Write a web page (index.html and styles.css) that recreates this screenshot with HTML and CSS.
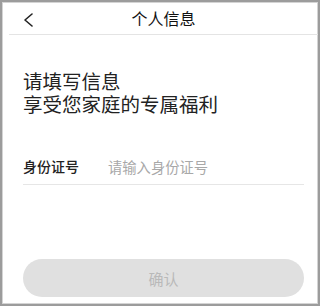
FILE: index.html
```html
<!DOCTYPE html>
<html lang="zh">
<head>
<meta charset="utf-8">
<link rel="stylesheet" href="styles.css">
</head>
<body>
<div class="frame">
  <header class="nav">
    <span class="back"><svg width="11" height="14" viewBox="0 0 11 14"><path d="M9 1 L2 7 L9 13" fill="none" stroke="#222" stroke-width="1.6" stroke-linecap="round" stroke-linejoin="round"/></svg></span>
    <h1 class="title">个人信息</h1>
  </header>
  <main class="content">
    <div class="intro">
      <p class="intro-line">请填写信息</p>
      <p class="intro-line">享受您家庭的专属福利</p>
    </div>
    <div class="field">
      <label class="label">身份证号</label>
      <span class="placeholder">请输入身份证号</span>
    </div>
    <div class="spacer"></div>
    <button class="confirm">确认</button>
  </main>
</div>
</body>
</html>
```
FILE: styles.css
```css
html, body {
  margin: 0;
  padding: 0;
  background: #fff;
}
body {
  font-family: "Noto Sans CJK SC", "Noto Sans", sans-serif;
}
.frame {
  box-sizing: border-box;
  width: 320px;
  height: 306px;
  border: 2px solid #9c9c9c;
  box-shadow: inset 0 0 0 1px #d4d4d4;
  display: flex;
  flex-direction: column;
}
.nav {
  position: relative;
  height: 32px;
  margin-left: 7px;
  border-bottom: 1px solid #e4e4e4;
  display: flex;
  align-items: center;
  justify-content: center;
}
.back {
  position: absolute;
  left: 14px;
  top: 11px;
  display: flex;
}
.title {
  margin: 0;
  font-size: 16px;
  font-weight: 400;
  color: #111;
  line-height: 32px;
}
.content {
  flex: 1;
  display: flex;
  flex-direction: column;
  padding: 0 14px 7px 21px;
}
.intro {
  margin-top: 34px;
  display: flex;
  flex-direction: column;
  gap: 0;
}
.intro-line {
  margin: 0;
  font-size: 19.5px;
  line-height: 23px;
  height: 23px;
  color: #222;
}
.field {
  margin-top: 33px;
  height: 36px;
  border-bottom: 1px solid #e6e6e6;
  display: flex;
  align-items: center;
  font-size: 14px;
}
.label {
  width: 85px;
  color: #222;
  font-weight: 500;
}
.placeholder {
  color: #a8a8a8;
  font-size: 14.3px;
}
.spacer {
  flex: 1;
}
.confirm {
  height: 38px;
  border: none;
  border-radius: 19px;
  background: #e0e0e0;
  color: #b9b9b9;
  font-family: inherit;
  font-size: 15px;
  padding: 0;
}
```
